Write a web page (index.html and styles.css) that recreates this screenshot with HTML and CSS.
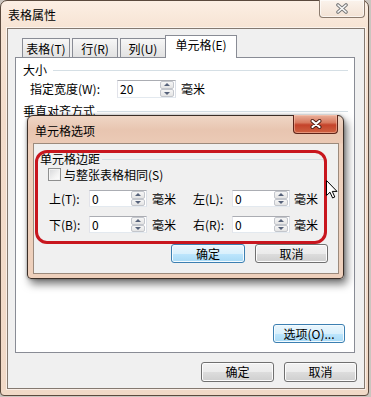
FILE: index.html
```html
<!DOCTYPE html>
<html>
<head>
<meta charset="utf-8">
<title>表格属性</title>
<link rel="stylesheet" href="styles.css">
</head>
<body>
<div class="window">
  <div class="titlebar">
    <span class="title">表格属性</span>
    <div class="close close-inactive">
      <svg width="14" height="11" viewBox="0 0 14 11"><path d="M3 2 L11 9 M11 2 L3 9" stroke="#7a7a7a" stroke-width="3.6" stroke-linecap="round"/><path d="M3 2 L11 9 M11 2 L3 9" stroke="#fbfbfb" stroke-width="1.6" stroke-linecap="round"/></svg>
    </div>
  </div>
  <div class="client">
    <div class="tabs">
      <div class="tab t1">表格(T)</div>
      <div class="tab t2">行(R)</div>
      <div class="tab t3">列(U)</div>
      <div class="tab sel">单元格(E)</div>
    </div>
    <div class="panel">
      <div class="group-head size-head"><span>大小</span><i class="rule"></i></div>
      <div class="width-row">
        <span class="lbl-w">指定宽度(W):</span>
        <div class="spin spin-w"><span class="val">20</span><span class="arrows"><b class="up"></b><b class="down"></b></span></div>
        <span class="unit">毫米</span>
      </div>
      <div class="group-head valign-head"><span>垂直对齐方式</span><i class="rule"></i></div>
      <div class="spacer"></div>
      <div class="opt-row"><button class="btn blue opt">选项(O)...</button></div>
    </div>
    <div class="footer">
      <button class="btn fbtn">确定</button>
      <button class="btn fbtn">取消</button>
    </div>
  </div>

  <div class="dialog">
    <div class="dtitlebar">
      <span class="dtitle">单元格选项</span>
      <div class="close close-red">
        <svg width="12" height="10" viewBox="0 0 12 10"><path d="M2.5 2 L9.5 8 M9.5 2 L2.5 8" stroke="#4a1d14" stroke-width="4" stroke-linecap="round"/><path d="M2.5 2 L9.5 8 M9.5 2 L2.5 8" stroke="#ffffff" stroke-width="2.2" stroke-linecap="round"/></svg>
      </div>
    </div>
    <div class="dclient">
      <div class="group-head margin-head"><span>单元格边距</span><i class="rule"></i></div>
      <div class="check-row"><span class="checkbox"></span><span class="check-lbl">与整张表格相同(S)</span></div>
      <div class="mrow mrow1">
        <span class="mlbl">上(T):</span>
        <div class="spin spin-m"><span class="val">0</span><span class="arrows"><b class="up"></b><b class="down"></b></span></div>
        <span class="unit u1">毫米</span>
        <span class="mlbl mlbl2">左(L):</span>
        <div class="spin spin-m"><span class="val">0</span><span class="arrows"><b class="up"></b><b class="down"></b></span></div>
        <span class="unit u2">毫米</span>
      </div>
      <div class="mrow mrow2">
        <span class="mlbl">下(B):</span>
        <div class="spin spin-m"><span class="val">0</span><span class="arrows"><b class="up"></b><b class="down"></b></span></div>
        <span class="unit u1">毫米</span>
        <span class="mlbl mlbl2">右(R):</span>
        <div class="spin spin-m"><span class="val">0</span><span class="arrows"><b class="up"></b><b class="down"></b></span></div>
        <span class="unit u2">毫米</span>
      </div>
      <div class="dbtns">
        <button class="btn blue dok">确定</button>
        <button class="btn dcancel">取消</button>
      </div>
    </div>
  </div>

  <div class="redmark"></div>

  <svg class="cursor" width="12" height="19" viewBox="0 0 12 19"><path d="M0.5 0.5 L0.5 15.5 L4 12.2 L6.6 18 L8.8 17 L6.3 11.4 L11 11.4 Z" fill="#ffffff" stroke="#000000" stroke-width="1" stroke-linejoin="round"/></svg>
</div>
</body>
</html>
```

FILE: styles.css
```css
html, body {
  margin: 0;
  padding: 0;
}
body {
  width: 371px;
  height: 397px;
  overflow: hidden;
  background: #cbc5bf;
  font-family: "Noto Sans CJK SC", "Liberation Sans", sans-serif;
  font-size: 12px;
  line-height: 14px;
  color: #000;
}
.window {
  position: relative;
  box-sizing: border-box;
  width: 369px;
  height: 396px;
  border: 1px solid #5b4a3e;
  border-radius: 7px 7px 4px 4px;
  background: linear-gradient(180deg, #fcefe4 0, #f7e4d4 26px, #f3dccb 120px, #f1d9c7 100%);
  padding: 0 3px 0 6px;
  display: flex;
  flex-direction: column;
}
.titlebar {
  height: 27px;
  display: flex;
  justify-content: space-between;
  align-items: flex-start;
}
.title {
  margin-left: 1px;
  margin-top: 7px;
}
.close {
  box-sizing: border-box;
  display: flex;
  align-items: center;
  justify-content: center;
  border-top: none;
}
.close-inactive {
  width: 46px;
  height: 18px;
  margin-top: -1px;
  margin-right: 0;
  border: 1px solid #8c7b6e;
  border-top: none;
  border-radius: 0 0 4px 4px;
  background: linear-gradient(180deg, #fbf3ec 0, #f3e2d4 100%);
  box-shadow: inset 0 0 0 1px rgba(255,255,255,0.6);
}
.client {
  box-sizing: border-box;
  width: 358px;
  height: 361px;
  border: 1px solid #847970;
  background: #f0f0f0;
  display: flex;
  flex-direction: column;
  box-shadow: 0 0 0 1px rgba(255,255,255,0.55);
}
.tabs {
  position: relative;
  z-index: 2;
  display: flex;
  align-items: flex-end;
  height: 22px;
  margin-top: 6px;
  margin-left: 14px;
}
.tab {
  box-sizing: border-box;
  height: 19px;
  padding-top: 3px;
  border: 1px solid #898c95;
  border-bottom: none;
  background: linear-gradient(180deg, #f7f7f7 0, #ececec 50%, #e2e2e2 100%);
  text-align: center;
  white-space: nowrap;
}
.t1 { width: 48px; margin-right: 2px; }
.t2 { width: 46px; margin-right: 2px; }
.t3 { width: 46px; }
.sel {
  width: 72px;
  height: 23px;
  margin-left: -1px;
  margin-bottom: -1px;
  padding-top: 2px;
  background: #ffffff;
}
.panel {
  box-sizing: border-box;
  width: 340px;
  height: 296px;
  margin-left: 7px;
  border: 1px solid #898c95;
  background: #ffffff;
  display: flex;
  flex-direction: column;
}
.group-head {
  display: flex;
  align-items: center;
  height: 14px;
  white-space: nowrap;
}
.rule {
  flex: 1;
  height: 1px;
  background: #d5dfe5;
}
.size-head {
  margin-top: 5px;
  padding-left: 7px;
}
.size-head .rule {
  margin-left: 6px;
  margin-right: 6px;
}
.width-row {
  display: flex;
  align-items: center;
  height: 18px;
  margin-top: 3px;
}
.lbl-w {
  width: 87px;
  padding-left: 14px;
  white-space: nowrap;
}
.spin {
  box-sizing: border-box;
  display: flex;
  align-items: stretch;
  background: #ffffff;
  border: 1px solid;
  border-color: #abadb3 #dbdfe6 #e3e9ef #e2e3ea;
}
.spin .val {
  flex: 1;
  padding-left: 2px;
  line-height: 14px;
  align-self: center;
}
.arrows {
  width: 14px;
  display: flex;
  flex-direction: column;
  margin: 0 1px 0 0;
}
.arrows b {
  flex: 1;
  position: relative;
  box-sizing: border-box;
  border: 1px solid #c3c6cc;
  border-radius: 2px;
  background: linear-gradient(180deg, #f6f6f6 0, #e4e4e4 100%);
}
.arrows b::after {
  content: "";
  position: absolute;
  left: 50%;
  top: 50%;
  margin-left: -3px;
  border-left: 3px solid transparent;
  border-right: 3px solid transparent;
}
.arrows .up::after {
  margin-top: -2px;
  border-bottom: 3px solid #56627a;
}
.arrows .down::after {
  margin-top: -1px;
  border-top: 3px solid #56627a;
}
.spin-w {
  width: 59px;
  height: 18px;
}
.unit {
  margin-left: 5px;
  white-space: nowrap;
}
.valign-head {
  margin-top: 6px;
  padding-left: 7px;
}
.valign-head .rule {
  margin-left: 2px;
  margin-right: 6px;
}
.spacer {
  flex: 1;
}
.opt-row {
  display: flex;
  justify-content: flex-end;
  margin-right: 9px;
  margin-bottom: 9px;
}
.btn {
  box-sizing: border-box;
  height: 19px;
  padding: 0;
  margin: 0;
  font-family: "Noto Sans CJK SC", "Liberation Sans", sans-serif;
  font-size: 12px;
  line-height: 14px;
  color: #000;
  text-align: center;
  border: 1px solid #707070;
  border-radius: 3px;
  background: linear-gradient(180deg, #f2f2f2 0, #ebebeb 50%, #dddddd 50%, #cfcfcf 100%);
  box-shadow: inset 0 0 0 1px #fcfcfc;
}
.btn.blue {
  border-color: #3c7fb1;
  background: linear-gradient(180deg, #eaf6fd 0, #d9f0fc 50%, #bee6fd 50%, #a7d9f5 100%);
  box-shadow: inset 0 0 0 1px #f4fbff;
}
.opt {
  width: 72px;
}
.footer {
  display: flex;
  justify-content: flex-end;
  gap: 10px;
  margin-top: 9px;
  margin-right: 7px;
}
.fbtn {
  width: 73px;
  height: 20px;
}

/* inner dialog */
.dialog {
  position: absolute;
  left: 26px;
  top: 114px;
  z-index: 5;
  box-sizing: border-box;
  width: 317px;
  height: 164px;
  border: 1px solid #3b2e27;
  border-radius: 6px 6px 4px 4px;
  background: linear-gradient(180deg, #efd6c5 0, #e8c5b0 14px, #ebcab6 27px, #efd1bd 28px, #eed0bc 100%);
  box-shadow: 3px 5px 9px rgba(0,0,0,0.55), 0 0 3px rgba(0,0,0,0.35);
  padding: 0 4px 4px 5px;
  display: flex;
  flex-direction: column;
}
.dtitlebar {
  height: 27px;
  display: flex;
  justify-content: space-between;
  align-items: flex-start;
}
.dtitle {
  margin-left: 2px;
  margin-top: 8px;
}
.close-red {
  width: 45px;
  height: 19px;
  margin-top: -1px;
  margin-right: 1px;
  border: 1px solid #5d2419;
  border-top: none;
  border-radius: 0 0 4px 4px;
  background: linear-gradient(180deg, #eab19c 0, #d87a5f 42%, #c4432a 55%, #cf6242 100%);
  box-shadow: inset 0 0 0 1px rgba(255,210,190,0.45);
}
.dclient {
  box-sizing: border-box;
  height: 131px;
  border: 1px solid #9c8a7c;
  background: #f0f0f0;
  display: flex;
  flex-direction: column;
}
.margin-head {
  margin-top: 8px;
  padding-left: 6px;
}
.margin-head .rule {
  margin-left: 2px;
  margin-right: 13px;
}
.check-row {
  display: flex;
  align-items: center;
  height: 13px;
  margin-top: 2px;
  margin-left: 14px;
}
.checkbox {
  box-sizing: border-box;
  width: 13px;
  height: 13px;
  border: 1px solid #8e8f8f;
  background: linear-gradient(135deg, #d6d7d9 0, #f2f2f2 60%, #ffffff 100%);
  box-shadow: inset 0 0 0 1px #f4f4f4;
}
.check-lbl {
  margin-left: 3px;
  white-space: nowrap;
}
.mrow {
  display: flex;
  align-items: center;
  height: 17px;
  padding-left: 15px;
}
.mrow1 { margin-top: 9px; }
.mrow2 { margin-top: 9px; }
.mlbl {
  width: 40px;
  white-space: nowrap;
}
.mlbl2 {
  width: 39px;
  margin-left: 17px;
}
.spin-m {
  width: 58px;
  height: 17px;
}
.u1 { margin-left: 5px; }
.u2 { margin-left: 4px; }
.dbtns {
  display: flex;
  justify-content: flex-end;
  gap: 10px;
  margin-top: 11px;
  margin-right: 10px;
}
.dok { width: 74px; }
.dcancel { width: 73px; }

.redmark {
  position: absolute;
  z-index: 6;
  left: 34px;
  top: 149px;
  box-sizing: border-box;
  width: 292px;
  height: 94px;
  border: 3px solid #c8161e;
  border-radius: 12px;
  pointer-events: none;
}
.cursor {
  position: absolute;
  z-index: 7;
  left: 325px;
  top: 179px;
}
```
